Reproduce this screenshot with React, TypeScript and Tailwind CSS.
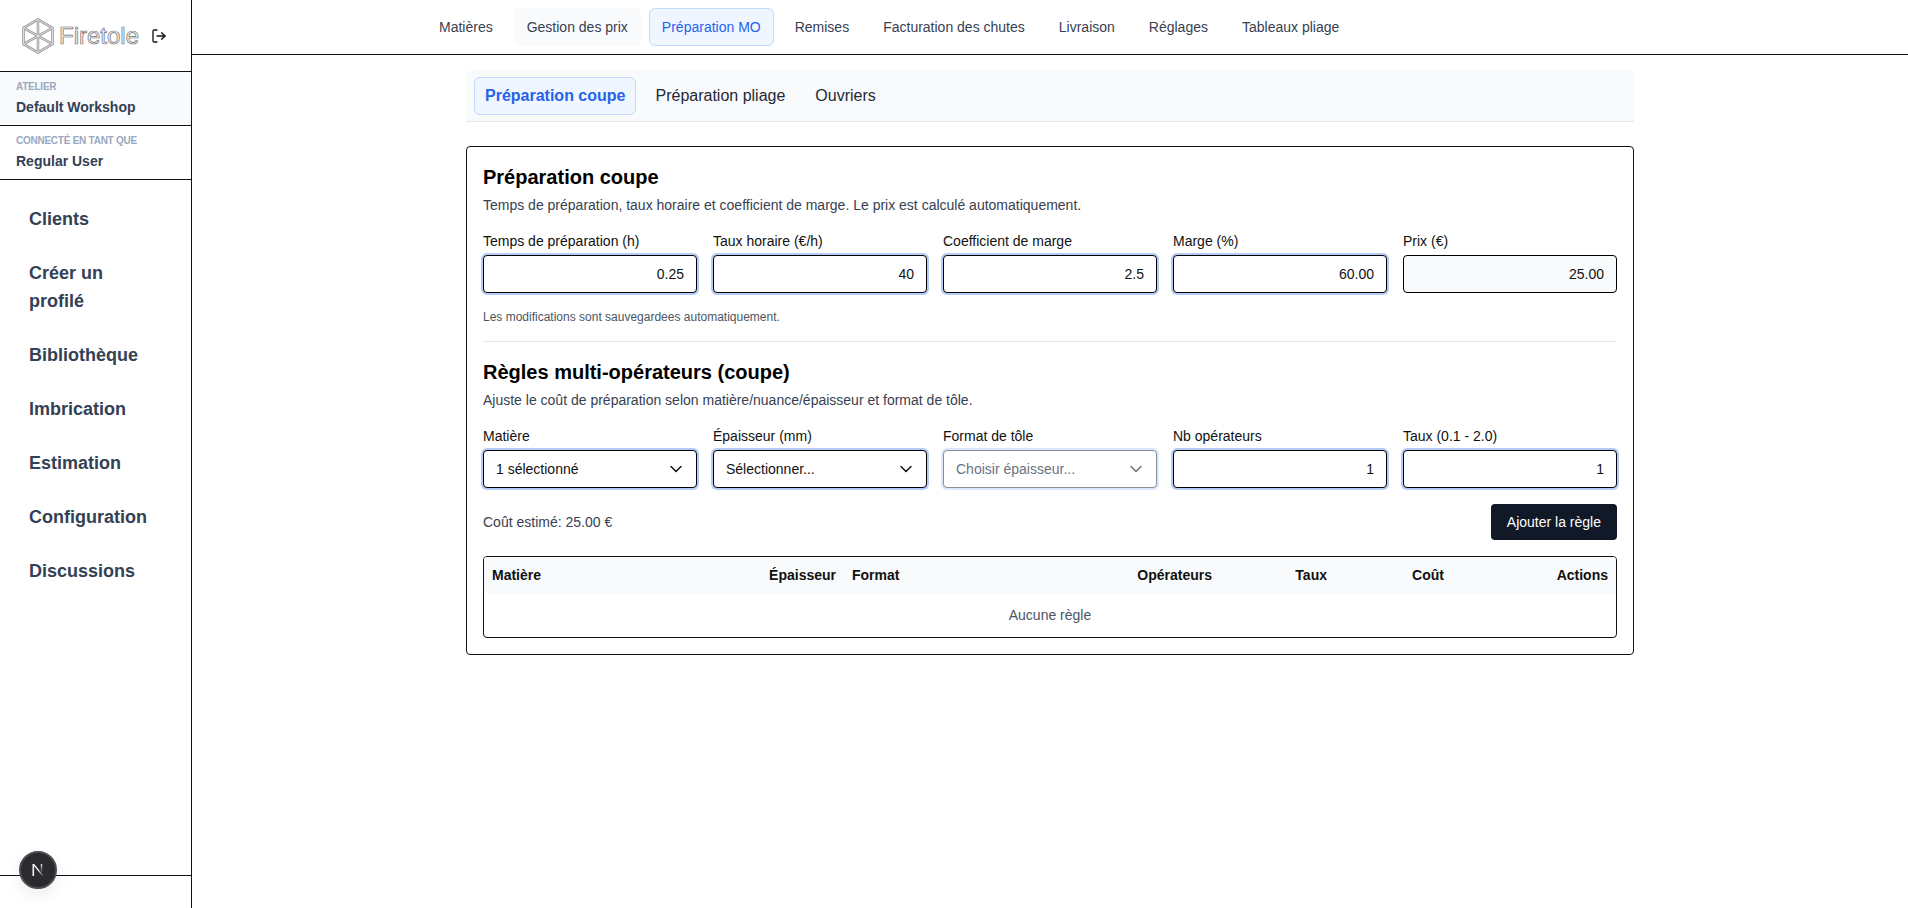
import { ChevronDown, LogOut } from "lucide-react";

const topTabs = ["Matières", "Gestion des prix", "Préparation MO", "Remises", "Facturation des chutes", "Livraison", "Réglages", "Tableaux pliage"];
const navItems = ["Clients", "Créer un profilé", "Bibliothèque", "Imbrication", "Estimation", "Configuration", "Discussions"];

function Logo() {
  return (
    <div className="flex items-center gap-[5px]">
      <svg width="32" height="36" viewBox="0 0 32 36" fill="none">
        <g stroke="#9a9a9e" strokeWidth="2.6" strokeLinejoin="round">
          <path d="M16 1.5 30.5 9.8V26.2L16 34.5 1.5 26.2V9.8Z" />
          <path d="M16 1.5V34.5M1.5 9.8 30.5 26.2M30.5 9.8 1.5 26.2" />
        </g>
        <g stroke="#e4e4e6" strokeWidth="0.9" strokeLinejoin="round">
          <path d="M16 1.5 30.5 9.8V26.2L16 34.5 1.5 26.2V9.8Z" />
          <path d="M16 1.5V34.5M1.5 9.8 30.5 26.2M30.5 9.8 1.5 26.2" />
        </g>
      </svg>
      <span className="text-[24px] leading-[32px] text-[#f3f4f6] [-webkit-text-stroke:0.7px_#6f6f74]">Firetole</span>
    </div>
  );
}

function NextMark() {
  return (
    <svg width="14" height="14" viewBox="0 0 14 14" fill="none">
      <defs>
        <linearGradient id="nextDiag" x1="3" y1="2" x2="12" y2="13" gradientUnits="userSpaceOnUse">
          <stop offset="0.4" stopColor="#fff" />
          <stop offset="1" stopColor="#fff" stopOpacity="0.1" />
        </linearGradient>
        <linearGradient id="nextStem" x1="10.5" y1="1" x2="10.5" y2="9" gradientUnits="userSpaceOnUse">
          <stop stopColor="#fff" stopOpacity="0.9" />
          <stop offset="1" stopColor="#fff" stopOpacity="0.1" />
        </linearGradient>
      </defs>
      <path d="M1.5 1H3.1V13H1.5Z" fill="#f4f4f5" />
      <path d="M1.5 1H3.2L13 13H11.1Z" fill="url(#nextDiag)" />
      <path d="M9.8 1H11.2V9H9.8Z" fill="url(#nextStem)" />
    </svg>
  );
}

function Sidebar() {
  return (
    <aside className="flex h-full w-[192px] shrink-0 flex-col border-r border-[#111]">
      <div className="flex h-[72px] items-center justify-between border-b border-[#111] pl-[22px] pr-[24px]">
        <Logo />
        <LogOut size={16} className="text-[#111]" />
      </div>
      <div className="h-[54px] border-b border-[#111] bg-[#f9fafb] px-4 pt-[9px]">
        <p className="text-[10px] leading-[12px] font-bold tracking-[-0.25px] uppercase text-[#9aa9bf]">Atelier</p>
        <p className="mt-1 text-sm font-semibold text-[#334155]">Default Workshop</p>
      </div>
      <div className="h-[54px] border-b border-[#111] px-4 pt-[9px]">
        <p className="text-[10px] leading-[12px] font-bold tracking-[-0.25px] uppercase text-[#9aa9bf]">Connecté en tant que</p>
        <p className="mt-1 text-sm font-semibold text-[#334155]">Regular User</p>
      </div>
      <nav className="flex flex-1 flex-col gap-[2px] pt-[13px]">
        {navItems.map((item) => (
          <a key={item} className="px-[29px] py-3 text-lg font-semibold text-[#334155]">
            {item}
          </a>
        ))}
      </nav>
      <div className="h-[33px] border-t border-[#111]" />
    </aside>
  );
}

function TopTabs() {
  return (
    <div className="flex h-[55px] shrink-0 items-start gap-2 border-b border-[#111] pl-[234px] pt-2">
      {topTabs.map((tab) => (
        <a
          key={tab}
          className={
            "h-[38px] rounded-md border px-3 text-sm leading-[36px] " +
            (tab === "Préparation MO"
              ? "border-[#bfdbfe] bg-[#eff6ff] text-[#2563eb]"
              : tab === "Gestion des prix"
                ? "border-transparent bg-[#f9fafb] text-[#374151]"
                : "border-transparent text-[#374151]")
          }
        >
          {tab}
        </a>
      ))}
    </div>
  );
}

function Field({ label, value, readOnly }: { label: string; value: string; readOnly?: boolean }) {
  return (
    <label className="block">
      <span className="mb-1 block text-sm text-[#111]">{label}</span>
      <input
        readOnly
        value={value}
        className={
          "h-[38px] w-full rounded border border-black px-3 text-right text-sm text-[#111] outline-none " +
          (readOnly ? "bg-[#f9fafb]" : "bg-white ring-2 ring-[#b3cbf6]")
        }
      />
    </label>
  );
}

function SelectField({ label, value, disabled }: { label: string; value: string; disabled?: boolean }) {
  return (
    <div>
      <span className="mb-1 block text-sm text-[#111]">{label}</span>
      <div
        className={
          "flex h-[38px] items-center justify-between rounded border bg-white pl-3 pr-[10px] text-sm ring-2 " +
          (disabled ? "border-[#8b8f96] text-[#6b7280] ring-[#dbe7fb]" : "border-black text-[#111] ring-[#b3cbf6]")
        }
      >
        <span>{value}</span>
        <ChevronDown size={20} strokeWidth={1.75} className={disabled ? "text-[#6b7280]" : "text-[#111]"} />
      </div>
    </div>
  );
}

function RulesTable() {
  return (
    <div className="mt-4 overflow-hidden rounded border border-[#111]">
      <table className="w-full table-fixed text-sm">
        <thead className="bg-[#f9fafb] text-[#111]">
          <tr>
            <th className="w-[277px] px-2 py-2 text-left font-bold">Matière</th>
            <th className="w-[83px] px-2 py-2 text-right font-bold">Épaisseur</th>
            <th className="px-2 py-2 text-left font-bold">Format</th>
            <th className="w-[92px] px-2 py-2 text-right font-bold">Opérateurs</th>
            <th className="w-[115px] px-2 py-2 text-right font-bold">Taux</th>
            <th className="w-[117px] px-2 py-2 text-right font-bold">Coût</th>
            <th className="w-[164px] px-2 py-2 text-right font-bold">Actions</th>
          </tr>
        </thead>
        <tbody>
          <tr>
            <td colSpan={7} className="py-3 text-center text-[#4b5563]">
              Aucune règle
            </td>
          </tr>
        </tbody>
      </table>
    </div>
  );
}

export default function App() {
  return (
    <div className="flex h-screen bg-white font-['Liberation_Sans',sans-serif]">
      <Sidebar />
      <main className="flex min-w-0 flex-1 flex-col">
        <TopTabs />
        <div className="mx-auto w-[1168px] pt-4">
          <div className="flex h-[51px] gap-2 border-b border-[#e5e7eb] bg-[#f9fafb] px-2 py-[6px]">
            <a className="h-[38px] rounded-md border border-[#bfdbfe] bg-[#eff6ff] px-[10px] text-base leading-[36px] font-semibold text-[#2563eb]">
              Préparation coupe
            </a>
            <a className="h-[38px] rounded-md border border-transparent px-[10px] text-base leading-[36px] text-[#1f2937]">
              Préparation pliage
            </a>
            <a className="h-[38px] rounded-md border border-transparent px-[10px] text-base leading-[36px] text-[#1f2937]">
              Ouvriers
            </a>
          </div>

          <section className="mt-6 rounded border border-[#111] bg-white p-4">
            <h2 className="text-xl font-semibold text-black">Préparation coupe</h2>
            <p className="mt-1 text-sm text-[#374151]">
              Temps de préparation, taux horaire et coefficient de marge. Le prix est calculé automatiquement.
            </p>
            <div className="mt-4 grid grid-cols-5 gap-4">
              <Field label="Temps de préparation (h)" value="0.25" />
              <Field label="Taux horaire (€/h)" value="40" />
              <Field label="Coefficient de marge" value="2.5" />
              <Field label="Marge (%)" value="60.00" />
              <Field label="Prix (€)" value="25.00" readOnly />
            </div>
            <p className="mt-4 text-xs text-[#4b5563]">Les modifications sont sauvegardees automatiquement.</p>

            <div className="mt-4 border-t border-[#e5e7eb] pt-4">
              <h2 className="text-xl font-semibold text-black">Règles multi-opérateurs (coupe)</h2>
              <p className="mt-1 text-sm text-[#374151]">
                Ajuste le coût de préparation selon matière/nuance/épaisseur et format de tôle.
              </p>
              <div className="mt-4 grid grid-cols-5 gap-4">
                <SelectField label="Matière" value="1 sélectionné" />
                <SelectField label="Épaisseur (mm)" value="Sélectionner..." />
                <SelectField label="Format de tôle" value="Choisir épaisseur..." disabled />
                <Field label="Nb opérateurs" value="1" />
                <Field label="Taux (0.1 - 2.0)" value="1" />
              </div>
              <div className="mt-4 flex items-center justify-between">
                <span className="text-sm text-[#374151]">Coût estimé: 25.00 €</span>
                <button className="h-9 rounded bg-[#111827] px-4 text-sm text-white">Ajouter la règle</button>
              </div>
              <RulesTable />
            </div>
          </section>
        </div>
      </main>
      <div className="fixed bottom-[19px] left-[19px] flex h-[38px] w-[38px] items-center justify-center rounded-full border-2 border-[#4a4a50] bg-[#2b2b2f] shadow-[0_6px_16px_rgba(0,0,0,0.08)]">
        <NextMark />
      </div>
    </div>
  );
}
